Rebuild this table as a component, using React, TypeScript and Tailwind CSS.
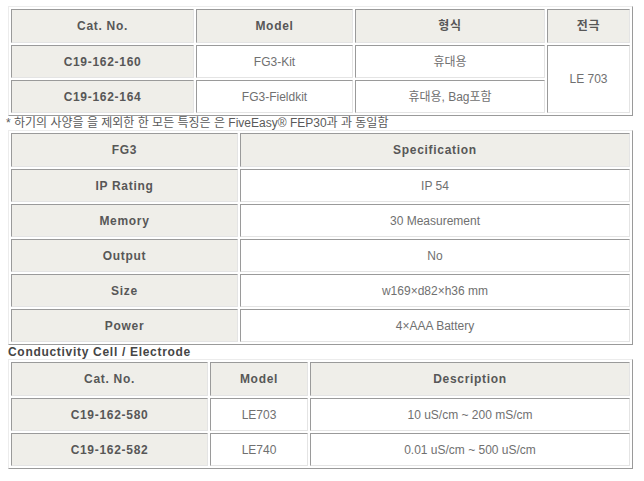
const th =
  'h-[34px] p-0 text-center align-middle bg-[#efeee9] font-bold text-[12px] tracking-[0.7px] text-[#575757] border border-t-[#9a9a9a] border-l-[#9a9a9a] border-r-[#e4e4e4] border-b-[#e4e4e4]';
const tdKey =
  'h-[33px] p-0 text-center align-middle bg-[#efeee9] font-bold text-[12px] tracking-[0.7px] text-[#575757] border border-t-[#9a9a9a] border-l-[#9a9a9a] border-r-[#e4e4e4] border-b-[#e4e4e4]';
const td =
  'h-[33px] p-0 text-center align-middle bg-white text-[12px] text-[#707070] border border-t-[#9a9a9a] border-l-[#9a9a9a] border-r-[#e4e4e4] border-b-[#e4e4e4]';
const table =
  'w-[625px] table-fixed border-separate border-spacing-[2px] border border-t-[#ececec] border-l-[#ececec] border-r-[#9a9a9a] border-b-[#9a9a9a]';

const specs = [
  ['IP Rating', 'IP 54'],
  ['Memory', '30 Measurement'],
  ['Output', 'No'],
  ['Size', 'w169×d82×h36 mm'],
  ['Power', '4×AAA Battery'],
];

const cells = [
  ['C19-162-580', 'LE703', '10 uS/cm ~ 200 mS/cm'],
  ['C19-162-582', 'LE740', '0.01 uS/cm ~ 500 uS/cm'],
];

export default function App() {
  return (
    <div
      className="w-[644px] h-[481px] bg-white pt-[6px] pl-[8px]"
      style={{ fontFamily: '"Liberation Sans", "Noto Sans CJK KR", sans-serif' }}
    >
      <table className={table}>
        <colgroup>
          <col className="w-[183px]" />
          <col className="w-[157px]" />
          <col className="w-[190px]" />
          <col className="w-[83px]" />
        </colgroup>
        <tbody>
          <tr>
            <td className={th}>Cat. No.</td>
            <td className={th}>Model</td>
            <td className={th}>형식</td>
            <td className={th}>전극</td>
          </tr>
          <tr>
            <td className={tdKey}>C19-162-160</td>
            <td className={td}>FG3-Kit</td>
            <td className={td}>휴대용</td>
            <td className={td} rowSpan={2}>LE 703</td>
          </tr>
          <tr>
            <td className={tdKey}>C19-162-164</td>
            <td className={td}>FG3-Fieldkit</td>
            <td className={td}>휴대용, Bag포함</td>
          </tr>
        </tbody>
      </table>

      <p className="-ml-[2px] h-[14px] text-[12px] leading-[14px] text-[#5a5a5a]">
        * 하기의 사양을 을 제외한 한 모든 특징은 은 FiveEasy® FEP30과 과 동일함
      </p>

      <table className={table}>
        <colgroup>
          <col className="w-[227px]" />
          <col className="w-[390px]" />
        </colgroup>
        <tbody>
          <tr>
            <td className={th}>FG3</td>
            <td className={th}>Specification</td>
          </tr>
          {specs.map(([k, v]) => (
            <tr key={k}>
              <td className={tdKey}>{k}</td>
              <td className={td}>{v}</td>
            </tr>
          ))}
        </tbody>
      </table>

      <p className="h-[14px] text-[12px] leading-[14px] font-bold tracking-[0.7px] text-[#454545]">
        Conductivity Cell / Electrode
      </p>

      <table className={table}>
        <colgroup>
          <col className="w-[197px]" />
          <col className="w-[98px]" />
          <col className="w-[320px]" />
        </colgroup>
        <tbody>
          <tr>
            <td className={th}>Cat. No.</td>
            <td className={th}>Model</td>
            <td className={th}>Description</td>
          </tr>
          {cells.map(([c, m, d]) => (
            <tr key={c}>
              <td className={tdKey}>{c}</td>
              <td className={td}>{m}</td>
              <td className={td}>{d}</td>
            </tr>
          ))}
        </tbody>
      </table>
    </div>
  );
}
